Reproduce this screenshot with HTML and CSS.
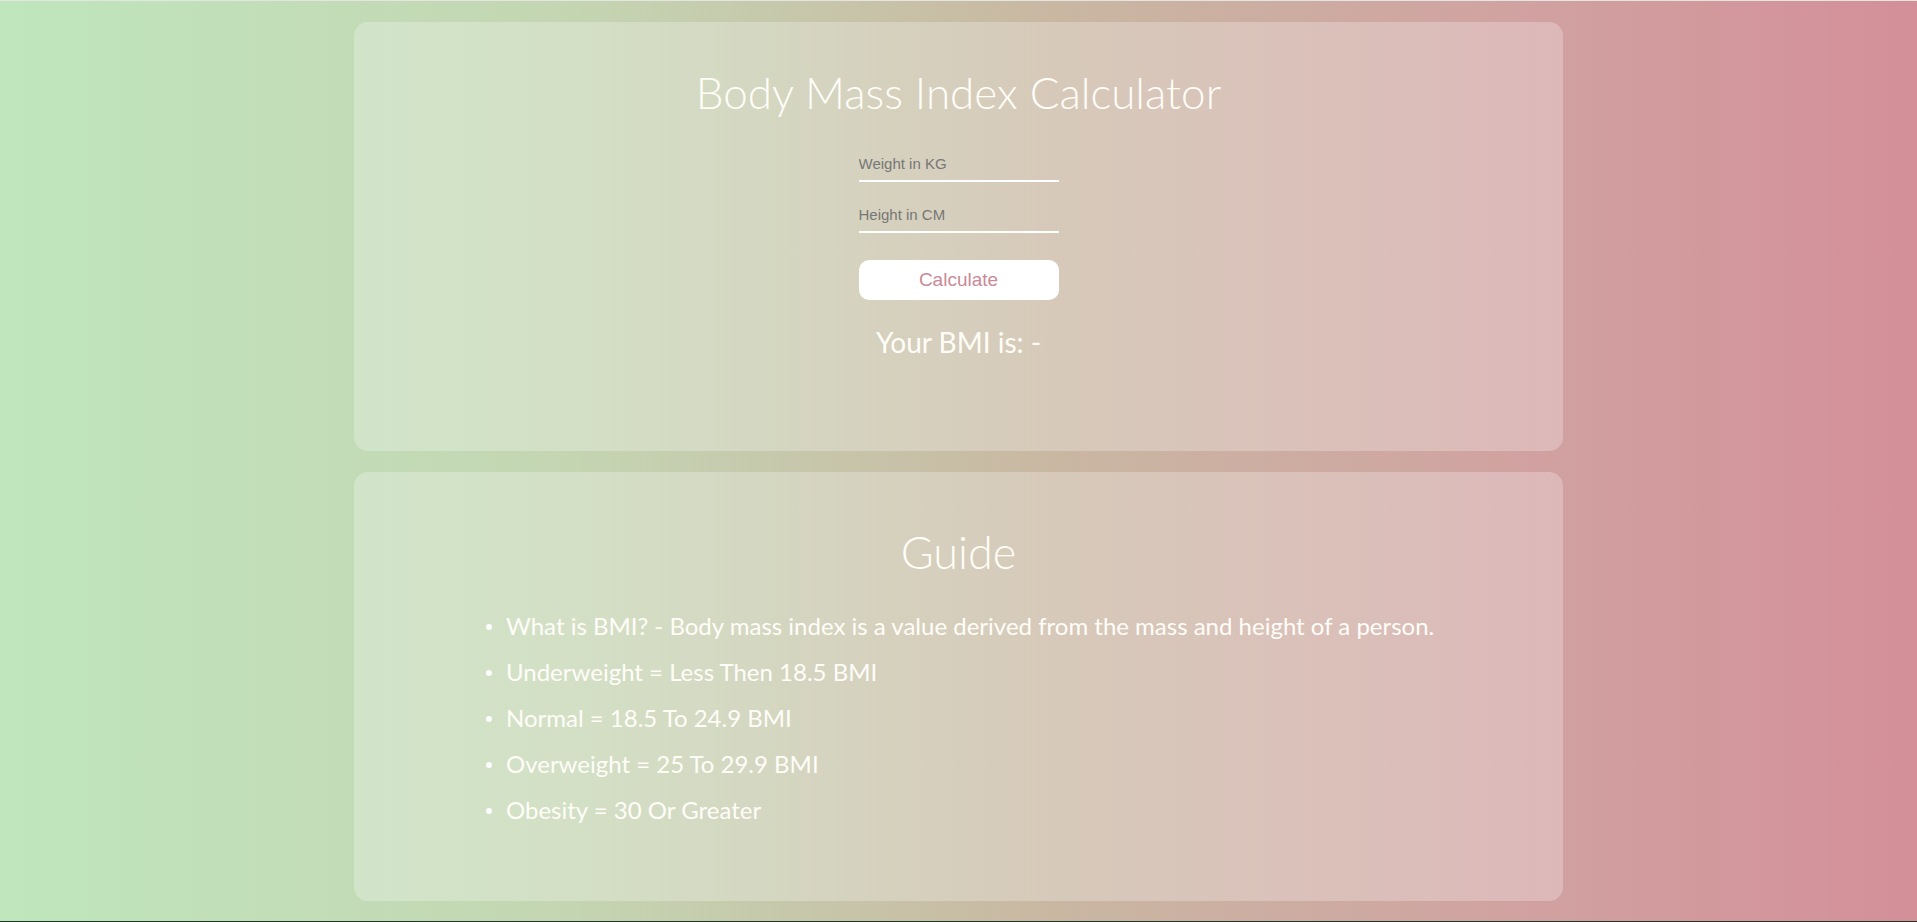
FILE: index.html
```html
<!DOCTYPE html>
<html>
<head>
<meta charset="utf-8">
<title>BMI Calculator</title>
<link rel="stylesheet" href="styles.css">
</head>
<body>
<main class="wrap">
  <section class="card calc">
    <h1 class="title">Body Mass Index Calculator</h1>
    <input class="field" type="text" placeholder="Weight in KG">
    <input class="field field-2" type="text" placeholder="Height in CM">
    <button class="btn">Calculate</button>
    <p class="result">Your BMI is: -</p>
  </section>
  <section class="card guide">
    <h2 class="guide-title">Guide</h2>
    <ul class="list">
      <li>What is BMI? - Body mass index is a value derived from the mass and height of a person.</li>
      <li>Underweight = Less Then 18.5 BMI</li>
      <li>Normal = 18.5 To 24.9 BMI</li>
      <li>Overweight = 25 To 29.9 BMI</li>
      <li>Obesity = 30 Or Greater</li>
    </ul>
  </section>
</main>
</body>
</html>
```
FILE: styles.css
```css
html {
  background: #1d3628;
}
body {
  margin: 0;
  height: 921px;
  box-sizing: border-box;
  border-top: 1px solid #e4e4e0;
  background: linear-gradient(to right, #bfe6bd 0%, #c4d5b2 30%, #c9b7a2 55%, #d0a3a1 78%, #d48f99 100%);
  font-family: Lato, "Open Sans", sans-serif;
  color: #fffdf8;
  overflow: hidden;
}
.wrap {
  width: 1209px;
  margin: 0 auto;
  padding-top: 21px;
  display: flex;
  flex-direction: column;
  gap: 21px;
}
.card {
  height: 429px;
  box-sizing: border-box;
  background: rgba(255, 255, 255, 0.26);
  border-radius: 14px;
  display: flex;
  flex-direction: column;
  align-items: center;
}
.title {
  margin: 40px 0 0;
  font-weight: 300;
  font-size: 44px;
  line-height: 60px;
  letter-spacing: 0;
}
.field {
  display: block;
  width: 200px;
  height: 30px;
  box-sizing: border-box;
  margin: 30px 0 0;
  padding: 0 0 5px;
  border: none;
  border-bottom: 2px solid #fff;
  background: transparent;
  font-family: "Liberation Sans", Arial, sans-serif;
  font-size: 15px;
  color: #555;
  outline: none;
}
.field::placeholder {
  color: #777;
}
.field-2 {
  margin-top: 21px;
}
.btn {
  width: 200px;
  height: 40px;
  margin-top: 27px;
  border: none;
  border-radius: 10px;
  background: #fff;
  color: #c98a98;
  font-family: "Liberation Sans", Arial, sans-serif;
  font-size: 19px;
  padding: 0;
}
.result {
  margin: 22px 0 0;
  font-size: 28px;
  font-weight: 400;
  line-height: 40px;
}
.guide-title {
  margin: 50px 0 0;
  font-size: 45px;
  font-weight: 300;
  line-height: 60px;
}
.list {
  align-self: stretch;
  margin: 21px 0 0;
  padding: 0 0 0 132px;
  list-style: none;
}
.list li {
  position: relative;
  padding-left: 20px;
  font-size: 24px;
  line-height: 46px;
}
.list li::before {
  content: "";
  position: absolute;
  left: 0;
  top: 21px;
  width: 6px;
  height: 6px;
  border-radius: 50%;
  background: #fff;
}
```
